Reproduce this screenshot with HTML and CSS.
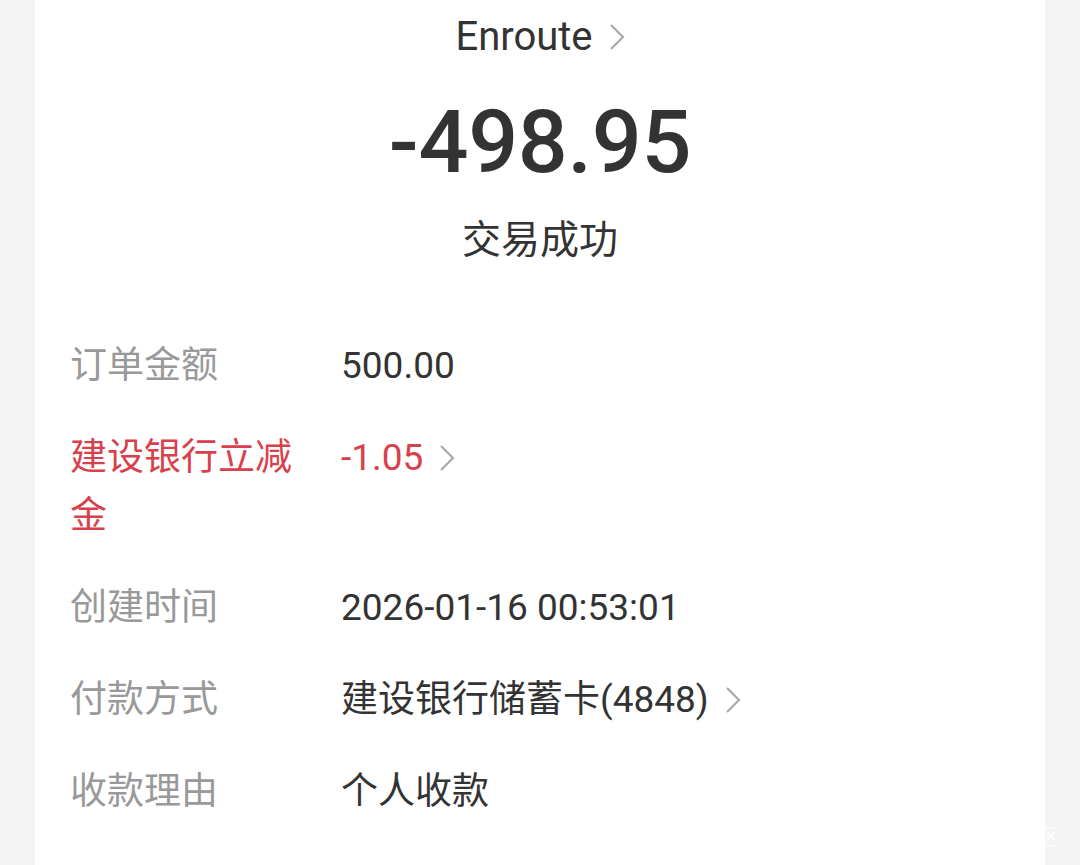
FILE: index.html
```html
<!DOCTYPE html>
<html lang="zh-CN">
<head>
<meta charset="utf-8">
<title>交易详情</title>
<link rel="stylesheet" href="styles.css">
</head>
<body>
<div class="card">
  <div class="title">
    <span>Enroute</span>
    <svg class="chev chev-title" viewBox="0 0 16 28"><path d="M2 2 L14 14 L2 26"/></svg>
  </div>
  <div class="amount">-498.95</div>
  <div class="status">交易成功</div>

  <div class="list">
    <div class="row">
      <div class="label">订单金额</div>
      <div class="value">500.00</div>
    </div>
    <div class="row red">
      <div class="label">建设银行立减金</div>
      <div class="value">-1.05<svg class="chev" viewBox="0 0 16 28"><path d="M2 2 L14 14 L2 26"/></svg></div>
    </div>
    <div class="row">
      <div class="label">创建时间</div>
      <div class="value">2026-01-16 00:53:01</div>
    </div>
    <div class="row">
      <div class="label">付款方式</div>
      <div class="value">建设银行储蓄卡(4848)<svg class="chev" viewBox="0 0 16 28"><path d="M2 2 L14 14 L2 26"/></svg></div>
    </div>
    <div class="row">
      <div class="label">收款理由</div>
      <div class="value">个人收款</div>
    </div>
    <div class="row last">
      <div class="label">支付时间</div>
      <div class="value"></div>
    </div>
  </div>
</div>
<svg class="mark" viewBox="0 0 14 20"><path d="M1 1 H13 M3 5 L11 14 M11 5 L3 14 M1 19 H13"/></svg>
</body>
</html>
```

FILE: styles.css
```css
html, body {
  margin: 0;
  padding: 0;
  height: 100%;
  overflow: hidden;
}
body {
  background: #f4f4f4;
  font-family: Roboto, "Noto Sans CJK SC", sans-serif;
  color: #333;
  position: relative;
}
.card {
  margin: 0 35px;
  background: #fff;
  height: 100%;
  box-sizing: border-box;
  padding: 0 35px;
}
.title {
  height: 74px;
  display: flex;
  align-items: center;
  justify-content: center;
  font-size: 40px;
  color: #333;
  gap: 16px;
}
.title span {
  line-height: 1;
}
.amount {
  text-align: center;
  font-size: 88px;
  font-weight: 500;
  line-height: 136px;
  color: #333;
  letter-spacing: -0.3px;
}
.status {
  text-align: center;
  font-size: 39px;
  line-height: 60px;
  color: #333;
}
.list {
  margin-top: 67px;
  display: flex;
  flex-direction: column;
  gap: 34px;
}
.row {
  display: grid;
  grid-template-columns: 236px 1fr;
  column-gap: 35px;
  font-size: 37px;
  line-height: 58px;
}
.row.last {
  margin-top: 1px;
}
.label {
  color: #999;
}
.value {
  color: #333;
  display: flex;
  align-items: center;
  height: 58px;
}
.red .label, .red .value {
  color: #d8404c;
}
.chev {
  width: 16px;
  height: 28px;
  margin-left: 16px;
  fill: none;
  stroke: #aaa;
  stroke-width: 2.2;
}
.chev-title {
  margin-left: 0;
}
.mark {
  position: absolute;
  left: 1044px;
  top: 827px;
  width: 14px;
  height: 20px;
  fill: none;
  stroke: #fff;
  stroke-width: 1.2;
}
```
